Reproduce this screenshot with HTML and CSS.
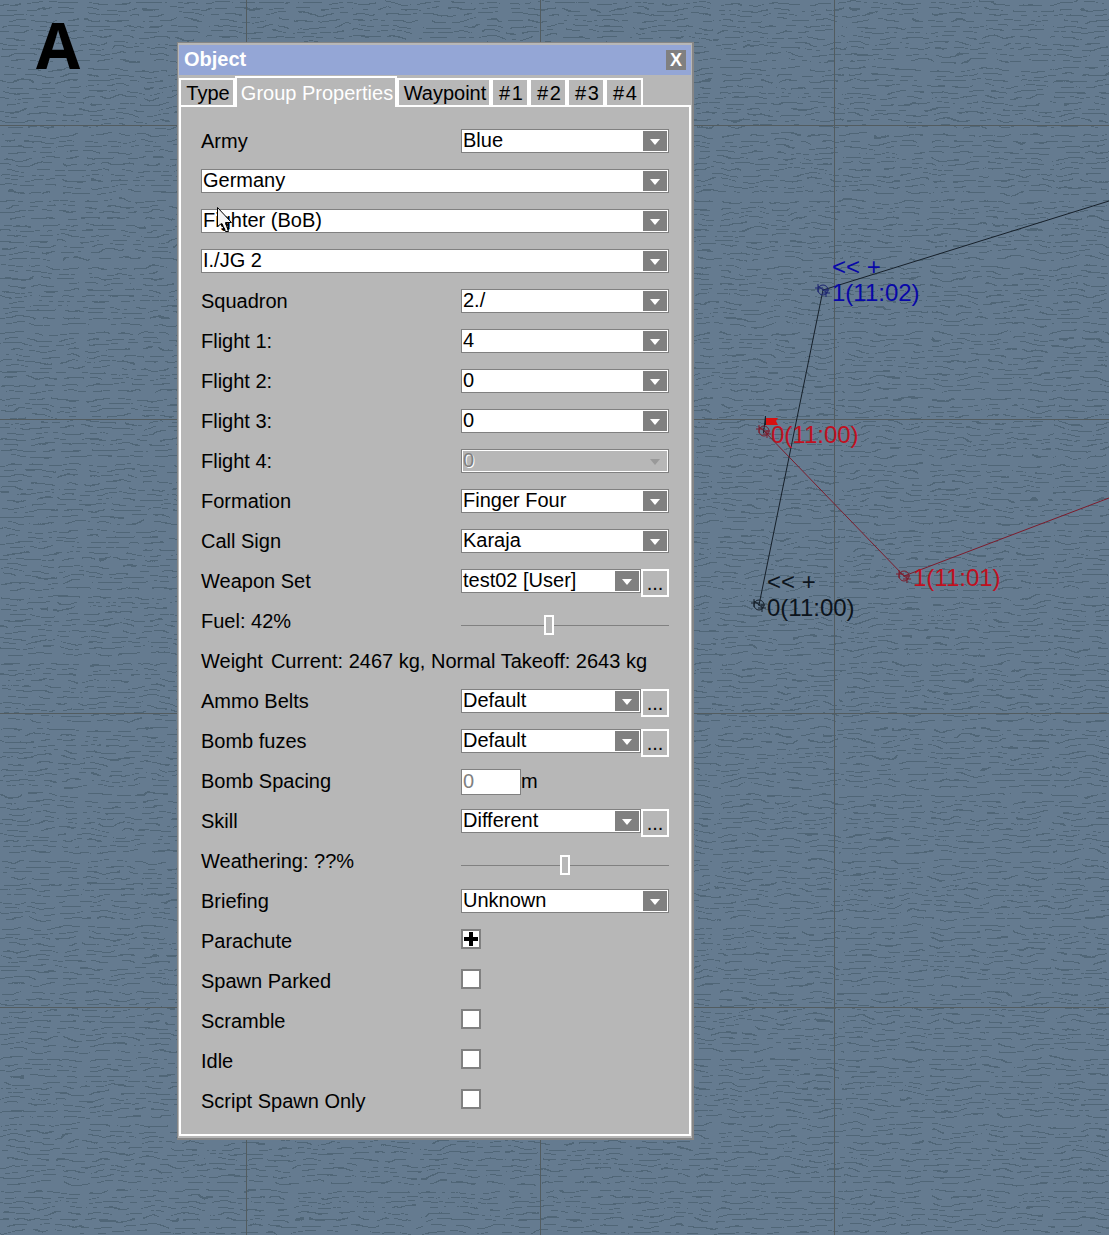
FILE: index.html
```html
<!DOCTYPE html>
<html lang="en">
<head>
<meta charset="utf-8">
<title>Mission editor</title>
<link rel="stylesheet" href="styles.css">
</head>
<body>
<main class="map">
  <svg class="map-layer" aria-hidden="true">
    <defs>
      <filter id="ripple" x="0" y="0" width="100%" height="100%" color-interpolation-filters="sRGB">
        <feTurbulence type="fractalNoise" baseFrequency="0.03 0.05" numOctaves="3" seed="7" result="noise"/>
        <feDisplacementMap in="SourceGraphic" in2="noise" scale="11" xChannelSelector="R" yChannelSelector="G"/>
      </filter>
      <pattern id="waves" width="211" height="66" patternUnits="userSpaceOnUse">
        <g class="wave">
          <path stroke-dasharray="22 7 14 5 31 9" d="M0 3.5H211"/>
          <path stroke-dasharray="12 9 27 6 17 11" d="M5 9.5H211"/>
          <path stroke-dasharray="33 8 9 6 20 12" d="M0 14.5H205"/>
          <path stroke-dasharray="16 6 24 13 11 5" d="M9 20.5H211"/>
          <path stroke-dasharray="28 11 18 6 13 8" d="M3 26.5H211"/>
          <path stroke-dasharray="11 5 36 9 15 7" d="M0 31.5H200"/>
          <path stroke-dasharray="19 12 13 5 29 6" d="M7 37.5H211"/>
          <path stroke-dasharray="25 6 16 9 10 14" d="M0 43.5H211"/>
          <path stroke-dasharray="14 8 30 7 21 5" d="M4 48.5H211"/>
          <path stroke-dasharray="35 9 12 6 18 10" d="M0 54.5H207"/>
          <path stroke-dasharray="17 5 22 12 26 7" d="M8 60.5H211"/>
        </g>
      </pattern>
      <pattern id="grid" x="246" y="125" width="294" height="294" patternUnits="userSpaceOnUse">
        <path class="grid-line" d="M0.5 0V294M0 0.5H294"/>
      </pattern>
      <g id="waypoint">
        <circle r="5"/>
        <path d="M-8 -2H0M-5 -6V2M-5 -4L4 3M-1 3H7M3 -1V7M-1 0H6"/>
      </g>
    </defs>
    <rect width="100%" height="100%" fill="url(#waves)" filter="url(#ripple)"/>
    <rect width="100%" height="100%" fill="url(#grid)"/>
    <path class="route route-black" d="M759 605L823 290L1109 201"/>
    <path class="route route-red" d="M764 431L904 576L1109 498"/>
    <use class="route route-blue" href="#waypoint" x="823" y="290"/>
    <use class="route route-black" href="#waypoint" x="759" y="605"/>
    <use class="route route-red" href="#waypoint" x="764" y="431"/>
    <use class="route route-red" href="#waypoint" x="904" y="576"/>
    <path class="route route-black" d="M763.5 433L765.5 416V425"/>
    <path fill="#d81010" d="M766 418H778L776 421L778 425H766Z"/>
  </svg>
  <span class="mark mark-blue" style="left:832px;top:254px">&lt;&lt; +<br>1(11:02)</span>
  <span class="mark mark-red" style="left:771px;top:422px">0(11:00)</span>
  <span class="mark mark-black" style="left:767px;top:569px">&lt;&lt; +<br>0(11:00)</span>
  <span class="mark mark-red" style="left:913px;top:565px">1(11:01)</span>
  <span class="figure">A</span>

  <section class="window" aria-label="Object">
    <header class="title"><h1>Object</h1><button class="close" type="button" aria-label="Close">X</button></header>
    <div class="tabs" role="tablist">
      <button type="button" role="tab" class="tab tab-type">Type</button>
      <button type="button" role="tab" class="tab tab-group active" aria-selected="true">Group Properties</button>
      <button type="button" role="tab" class="tab tab-way">Waypoint</button>
      <button type="button" role="tab" class="tab">#&#8202;1</button>
      <button type="button" role="tab" class="tab">#&#8202;2</button>
      <button type="button" role="tab" class="tab">#&#8202;3</button>
      <button type="button" role="tab" class="tab">#&#8202;4</button>
    </div>
    <form class="panel">
      <div class="row"><label for="army">Army</label><span class="combo"><select id="army"><option>Blue</option></select></span></div>
      <div class="row wide"><span class="combo"><select aria-label="Country"><option>Germany</option></select></span></div>
      <div class="row wide"><span class="combo"><select aria-label="Branch"><option>Fighter (BoB)</option></select></span></div>
      <div class="row wide"><span class="combo"><select aria-label="Regiment"><option>I./JG 2</option></select></span></div>
      <div class="row"><label for="squadron">Squadron</label><span class="combo"><select id="squadron"><option>2./</option></select></span></div>
      <div class="row"><label for="f1">Flight 1:</label><span class="combo"><select id="f1"><option>4</option></select></span></div>
      <div class="row"><label for="f2">Flight 2:</label><span class="combo"><select id="f2"><option>0</option></select></span></div>
      <div class="row"><label for="f3">Flight 3:</label><span class="combo"><select id="f3"><option>0</option></select></span></div>
      <div class="row"><label for="f4">Flight 4:</label><span class="combo off"><select id="f4" disabled><option>0</option></select></span></div>
      <div class="row"><label for="formation">Formation</label><span class="combo"><select id="formation"><option>Finger Four</option></select></span></div>
      <div class="row"><label for="callsign">Call Sign</label><span class="combo"><select id="callsign"><option>Karaja</option></select></span></div>
      <div class="row"><label for="weapon">Weapon Set</label><span class="pair"><span class="combo"><select id="weapon"><option>test02 [User]</option></select></span><button class="more" type="button">...</button></span></div>
      <div class="row"><label for="fuel">Fuel: 42%</label><input id="fuel" type="range" value="42"></div>
      <div class="row wide"><p class="weight"><span>Weight</span><span>Current: 2467 kg, Normal Takeoff: 2643 kg</span></p></div>
      <div class="row"><label for="belts">Ammo Belts</label><span class="pair"><span class="combo"><select id="belts"><option>Default</option></select></span><button class="more" type="button">...</button></span></div>
      <div class="row"><label for="fuzes">Bomb fuzes</label><span class="pair"><span class="combo"><select id="fuzes"><option>Default</option></select></span><button class="more" type="button">...</button></span></div>
      <div class="row"><label for="spacing">Bomb Spacing</label><span class="pair"><input class="text" id="spacing" type="text" value="0" disabled><span class="unit">m</span></span></div>
      <div class="row"><label for="skill">Skill</label><span class="pair"><span class="combo"><select id="skill"><option>Different</option></select></span><button class="more" type="button">...</button></span></div>
      <div class="row"><label for="weathering">Weathering: ??%</label><input id="weathering" type="range" value="52" max="104"></div>
      <div class="row"><label for="briefing">Briefing</label><span class="combo"><select id="briefing"><option>Unknown</option></select></span></div>
      <div class="row"><label for="parachute">Parachute</label><input id="parachute" type="checkbox" checked></div>
      <div class="row"><label for="parked">Spawn Parked</label><input id="parked" type="checkbox"></div>
      <div class="row"><label for="scramble">Scramble</label><input id="scramble" type="checkbox"></div>
      <div class="row"><label for="idle">Idle</label><input id="idle" type="checkbox"></div>
      <div class="row"><label for="script">Script Spawn Only</label><input id="script" type="checkbox"></div>
    </form>
  </section>

  <svg class="cursor" width="16" height="27" viewBox="0 0 16 27" aria-hidden="true">
    <path d="M0.5 0.5V19.5L4.5 16.5L8.5 24.5H11.5L8.5 15.5H14.5Z"/>
    <path d="M4.5 17L8 24M9 16L12 23" stroke-width="2" stroke-dasharray="3 1"/>
  </svg>
</main>
</body>
</html>
```
FILE: styles.css
```css
* { box-sizing: border-box; }
body {
  margin: 0;
  font: 20px/24px "Liberation Sans", Arial, sans-serif;
  color: #000;
}
button, input, select { font: inherit; color: inherit; margin: 0; padding: 0; border-radius: 0; }

.map {
  position: relative;
  display: flow-root;
  min-height: 100vh;
  overflow: hidden;
  background: #657b90;
}
.map-layer { position: absolute; inset: 0; width: 100%; height: 100%; }
.wave { fill: none; stroke: #435868; stroke-width: 1; stroke-opacity: 0.6; }
.grid-line { fill: none; stroke: #525c60; stroke-width: 1; }
.route { fill: none; stroke-width: 1; }
.route-black { stroke: #16202a; }
.route-blue { stroke: #1c2470; }
.route-red { stroke: #7c1c2c; }
.mark { position: absolute; font-size: 24px; line-height: 26px; white-space: nowrap; }
.mark-blue { color: #0808a8; }
.mark-red { color: #c01020; }
.mark-black { color: #0c141c; }
.figure {
  position: absolute;
  left: 36px;
  top: 13px;
  font: bold 64px/64px "Open Sans", sans-serif;
}

.window {
  position: relative;
  width: 517px;
  margin: 42px 0 95px 177px;
  padding: 2px 1px 2px 1px;
  border: solid #868686;
  border-width: 1px 2px 2px 1px;
  background: #b7b7b7;
}
.title {
  display: flex;
  justify-content: space-between;
  align-items: center;
  height: 30px;
  padding: 0 5px;
  background: #94a6d6;
  color: #fff;
}
.title h1 { margin: 0; padding-bottom: 2px; font-size: 20px; line-height: 28px; }
.close {
  width: 20px;
  height: 20px;
  border: 0;
  background: #808080;
  font-weight: bold;
  font-size: 18px;
  line-height: 20px;
}
.tabs { display: flex; align-items: flex-end; height: 32px; margin-bottom: -2px; padding-top: 1px; position: relative; }
.tab {
  width: 38px;
  height: 29px;
  padding-left: 2px;
  border: 2px solid #fff;
  background: #b7b7b7;
  white-space: nowrap;
  line-height: 24px;
}
.tab-type { width: 56px; }
.tab-group { width: 162px; }
.tab-way { width: 94px; }
.tab.active { height: 31px; border-bottom: 0; color: #fff; }

.panel { border: 2px solid #fff; padding: 22px 20px 5px; }
.row { display: grid; grid-template-columns: 1fr 208px; align-items: start; height: 40px; }
.row.wide { grid-template-columns: 1fr; }
.weight { display: flex; gap: 8px; margin: 0; white-space: nowrap; }
.pair { display: flex; align-items: flex-start; }

.combo { display: grid; flex: 1; min-width: 0; height: 24px; align-items: start; border: 1px solid #808080; background: #fff; }
.combo select {
  grid-area: 1 / 1;
  width: 100%;
  height: 24px;
  margin-top: -2px;
  appearance: none;
  border: 0;
  padding-left: 1px;
  background: none;
  line-height: 24px;
}
.combo::before, .combo::after { content: ""; grid-area: 1 / 1; justify-self: end; pointer-events: none; }
.combo::before { width: 24px; height: 20px; margin: 1px; background: #808080; }
.combo::after { width: 10px; height: 6px; margin: 9px 8px 0; background: #fff; clip-path: polygon(0 0, 100% 0, 50% 100%); }
.combo.off { background: #b7b7b7; box-shadow: inset 0 0 0 1px #fff; }
.combo.off::before { background: none; }
.combo.off::after { background: #999; }
.combo.off select { color: #808080; opacity: 1; text-shadow: 1px 1px #fff; }

.more { width: 28px; height: 28px; border: 2px solid #fff; background: #b7b7b7; line-height: 24px; }
.text { width: 60px; height: 26px; border: 1px solid #808080; padding: 0 0 2px 1px; background: #fff; color: #808080; }

input[type="range"] { appearance: none; width: 208px; height: 32px; background: linear-gradient(#808080, #808080) 0 16px / 100% 1px no-repeat; }
input[type="range"]::-webkit-slider-thumb { appearance: none; width: 10px; height: 20px; border: 2px solid #fff; background: #b7b7b7; }
input[type="checkbox"] { appearance: none; width: 20px; height: 20px; border: 2px solid #808080; background: #fff; }
input[type="checkbox"]:checked {
  background:
    linear-gradient(#000, #000) center / 14px 4px no-repeat,
    linear-gradient(#000, #000) center / 4px 14px no-repeat,
    #fff;
}

.cursor { position: absolute; left: 217px; top: 207px; fill: #f4f4f4; stroke: #000; }
```
